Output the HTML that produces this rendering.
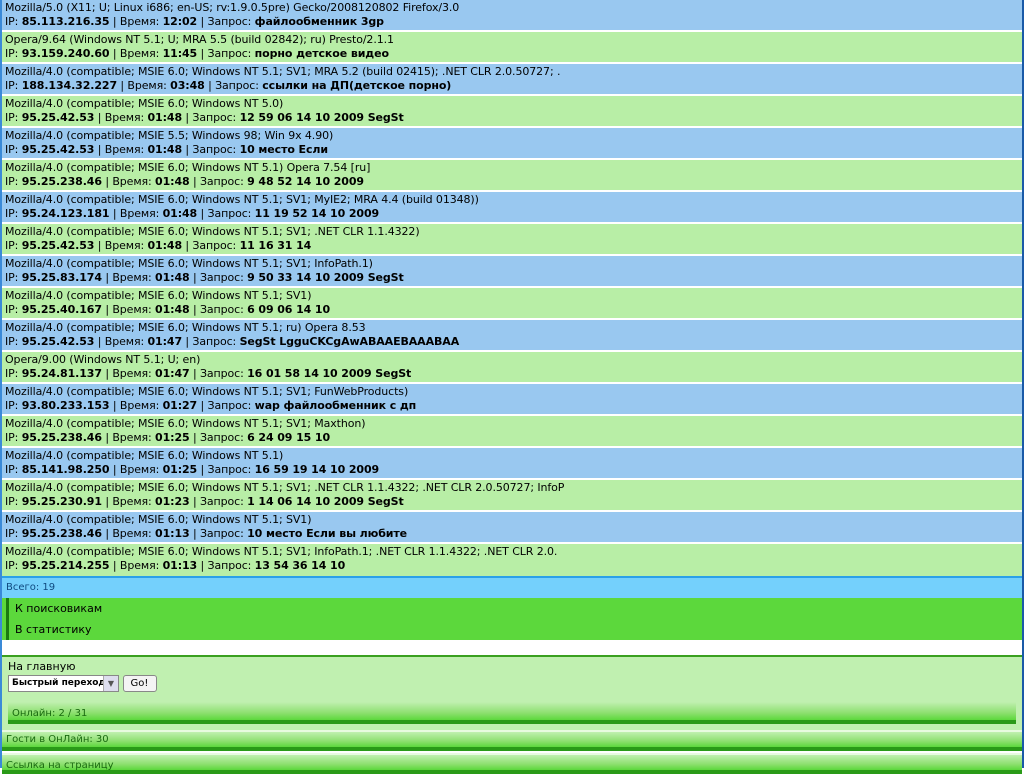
<!DOCTYPE html>
<html><head><meta charset="utf-8"><style>
body{margin:0;background:#fff;font-family:"DejaVu Sans","Liberation Sans",sans-serif;font-size:11px;color:#000;width:1024px;height:768px;overflow:hidden}
#w{position:absolute;left:0;top:0;width:1020px;height:768px;border-left:2px solid #3a8ad8;border-right:2px solid #1a5aa8}
.r{height:32px;box-sizing:border-box;border-bottom:2px solid #fff;padding:1px 0 0 3px;line-height:14px;white-space:nowrap;overflow:hidden;letter-spacing:-0.1px}
.b{background:#99c8f0}.g{background:#b8eea6}
.tot{border-top:2px solid #2aa0e8;background:#74d0fc;height:20px;line-height:20px;padding-left:4px;color:#104a80}
.lk{background:#5cd83c;height:42px;padding:0 0 0 4px}
.lk div{border-left:3px solid #1a7a10;height:21px;line-height:21px;padding-left:6px}
.pan{position:absolute;top:655px;left:0;width:1020px;height:90px;border-top:2px solid #3aa020;background:#c0f0b0}
.bar{background:linear-gradient(#c0f0b0,#8ee070 60%,#5cd83c);border-bottom:4px solid #2a9a18;color:#1a6a10;line-height:16px;font-size:10px}
</style></head><body><div id="w">
<div class="r b">Mozilla/5.0 (X11; U; Linux i686; en-US; rv:1.9.0.5pre) Gecko/2008120802 Firefox/3.0<br>IP: <b>85.113.216.35</b> | Время: <b>12:02</b> | Запрос: <b>файлообменник 3gp</b></div>
<div class="r g">Opera/9.64 (Windows NT 5.1; U; MRA 5.5 (build 02842); ru) Presto/2.1.1<br>IP: <b>93.159.240.60</b> | Время: <b>11:45</b> | Запрос: <b>порно детское видео</b></div>
<div class="r b">Mozilla/4.0 (compatible; MSIE 6.0; Windows NT 5.1; SV1; MRA 5.2 (build 02415); .NET CLR 2.0.50727; .<br>IP: <b>188.134.32.227</b> | Время: <b>03:48</b> | Запрос: <b>ссылки на ДП(детское порно)</b></div>
<div class="r g">Mozilla/4.0 (compatible; MSIE 6.0; Windows NT 5.0)<br>IP: <b>95.25.42.53</b> | Время: <b>01:48</b> | Запрос: <b>12 59 06 14 10 2009 SegSt</b></div>
<div class="r b">Mozilla/4.0 (compatible; MSIE 5.5; Windows 98; Win 9x 4.90)<br>IP: <b>95.25.42.53</b> | Время: <b>01:48</b> | Запрос: <b>10 место Если</b></div>
<div class="r g">Mozilla/4.0 (compatible; MSIE 6.0; Windows NT 5.1) Opera 7.54 [ru]<br>IP: <b>95.25.238.46</b> | Время: <b>01:48</b> | Запрос: <b>9 48 52 14 10 2009</b></div>
<div class="r b">Mozilla/4.0 (compatible; MSIE 6.0; Windows NT 5.1; SV1; MyIE2; MRA 4.4 (build 01348))<br>IP: <b>95.24.123.181</b> | Время: <b>01:48</b> | Запрос: <b>11 19 52 14 10 2009</b></div>
<div class="r g">Mozilla/4.0 (compatible; MSIE 6.0; Windows NT 5.1; SV1; .NET CLR 1.1.4322)<br>IP: <b>95.25.42.53</b> | Время: <b>01:48</b> | Запрос: <b>11 16 31 14</b></div>
<div class="r b">Mozilla/4.0 (compatible; MSIE 6.0; Windows NT 5.1; SV1; InfoPath.1)<br>IP: <b>95.25.83.174</b> | Время: <b>01:48</b> | Запрос: <b>9 50 33 14 10 2009 SegSt</b></div>
<div class="r g">Mozilla/4.0 (compatible; MSIE 6.0; Windows NT 5.1; SV1)<br>IP: <b>95.25.40.167</b> | Время: <b>01:48</b> | Запрос: <b>6 09 06 14 10</b></div>
<div class="r b">Mozilla/4.0 (compatible; MSIE 6.0; Windows NT 5.1; ru) Opera 8.53<br>IP: <b>95.25.42.53</b> | Время: <b>01:47</b> | Запрос: <b>SegSt LgguCKCgAwABAAEBAAABAA</b></div>
<div class="r g">Opera/9.00 (Windows NT 5.1; U; en)<br>IP: <b>95.24.81.137</b> | Время: <b>01:47</b> | Запрос: <b>16 01 58 14 10 2009 SegSt</b></div>
<div class="r b">Mozilla/4.0 (compatible; MSIE 6.0; Windows NT 5.1; SV1; FunWebProducts)<br>IP: <b>93.80.233.153</b> | Время: <b>01:27</b> | Запрос: <b>wap файлообменник с дп</b></div>
<div class="r g">Mozilla/4.0 (compatible; MSIE 6.0; Windows NT 5.1; SV1; Maxthon)<br>IP: <b>95.25.238.46</b> | Время: <b>01:25</b> | Запрос: <b>6 24 09 15 10</b></div>
<div class="r b">Mozilla/4.0 (compatible; MSIE 6.0; Windows NT 5.1)<br>IP: <b>85.141.98.250</b> | Время: <b>01:25</b> | Запрос: <b>16 59 19 14 10 2009</b></div>
<div class="r g">Mozilla/4.0 (compatible; MSIE 6.0; Windows NT 5.1; SV1; .NET CLR 1.1.4322; .NET CLR 2.0.50727; InfoP<br>IP: <b>95.25.230.91</b> | Время: <b>01:23</b> | Запрос: <b>1 14 06 14 10 2009 SegSt</b></div>
<div class="r b">Mozilla/4.0 (compatible; MSIE 6.0; Windows NT 5.1; SV1)<br>IP: <b>95.25.238.46</b> | Время: <b>01:13</b> | Запрос: <b>10 место Если вы любите</b></div>
<div class="r g" style="border-bottom:0">Mozilla/4.0 (compatible; MSIE 6.0; Windows NT 5.1; SV1; InfoPath.1; .NET CLR 1.1.4322; .NET CLR 2.0.<br>IP: <b>95.25.214.255</b> | Время: <b>01:13</b> | Запрос: <b>13 54 36 14 10</b></div>
<div class="tot" style="font-size:10px">Всего: 19</div>
<div class="lk"><div>К поисковикам</div><div>В статистику</div></div>
<div class="pan">
<div style="padding:3px 0 0 6px;font-size:11px;line-height:13px">На главную</div>
<div style="padding:2px 0 0 6px;height:18px"><span style="display:inline-block;border:1px solid #888;background:#fff;height:17px;width:111px;vertical-align:top;position:relative;line-height:15px;padding-left:3px;box-sizing:border-box;font-weight:bold;font-size:9px;overflow:hidden;white-space:nowrap">Быстрый переход<span style="position:absolute;right:0;top:0;width:14px;height:15px;background:#dde;border-left:1px solid #aaa;text-align:center;font-size:8px;color:#555">▼</span></span> <span style="display:inline-block;border:1px solid #888;border-radius:3px;background:#f4f4f4;height:15px;width:32px;text-align:center;line-height:15px;vertical-align:top;font-size:10px">Go!</span></div>
<div class="bar" style="position:absolute;left:6px;top:45px;width:1004px;height:18px;line-height:24px;padding-left:4px">Онлайн: 2 / 31</div>
</div>
<div class="bar" style="position:absolute;top:730px;left:0;width:1016px;height:15px;padding-left:4px;border-top:2px solid #e8fbe0">Гости в ОнЛайн: 30</div>
<div class="bar" style="position:absolute;top:753px;left:0;width:1016px;height:15px;padding-left:4px;border-top:2px solid #e8fbe0;line-height:22px">Ссылка на страницу</div>
</div></body></html>
